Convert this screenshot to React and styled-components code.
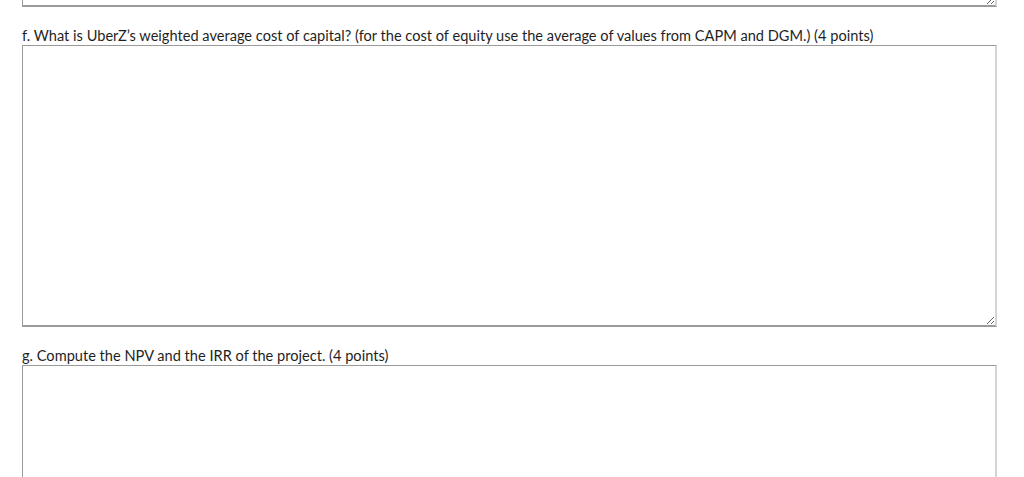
import styled, { createGlobalStyle } from "styled-components";

const GlobalStyle = createGlobalStyle`
  html, body {
    margin: 0;
    padding: 0;
    background: #ffffff;
    overflow: hidden;
  }
`;

const Page = styled.div`
  height: 477px;
  overflow: hidden;
  padding-left: 22px;
  font-family: Lato, "Open Sans", sans-serif;
  color: #1f1f1f;
`;

const Scroller = styled.div`
  width: 975px;
  margin-top: ${({ offset }) => offset}px;
`;

const Question = styled.div`
  margin-top: ${({ first }) => (first ? 0 : 20)}px;
`;

const Label = styled.div`
  font-size: 14.6px;
  line-height: 18px;
  height: 18px;
  white-space: nowrap;
`;

const Answer = styled.textarea`
  display: block;
  box-sizing: border-box;
  width: 975px;
  height: ${({ rows }) => rows}px;
  margin: 0;
  padding: 4px;
  border-top: 1px solid #9a9a9a;
  border-left: 1px solid #9a9a9a;
  border-right: 2px solid #d4d4d4;
  border-bottom: 2px solid #9a9a9a;
  background: #ffffff;
  resize: vertical;
  outline: none;
  font-family: inherit;
`;

const questions = [
  {
    id: "f",
    text: "f. What is UberZ\u2019s weighted average cost of capital? (for the cost of equity use the average of values from CAPM and DGM.) (4 points)",
    height: 282,
  },
  {
    id: "g",
    text: "g. Compute the NPV and the IRR of the project. (4 points)",
    height: 282,
  },
];

export default function App() {
  return (
    <Page>
      <GlobalStyle />
      <Scroller offset={-273}>
        <Question first>
          <Answer rows={280} aria-label="e" />
        </Question>
        {questions.map((q) => (
          <Question key={q.id}>
            <Label>{q.text}</Label>
            <Answer rows={q.height} aria-label={q.id} />
          </Question>
        ))}
      </Scroller>
    </Page>
  );
}
